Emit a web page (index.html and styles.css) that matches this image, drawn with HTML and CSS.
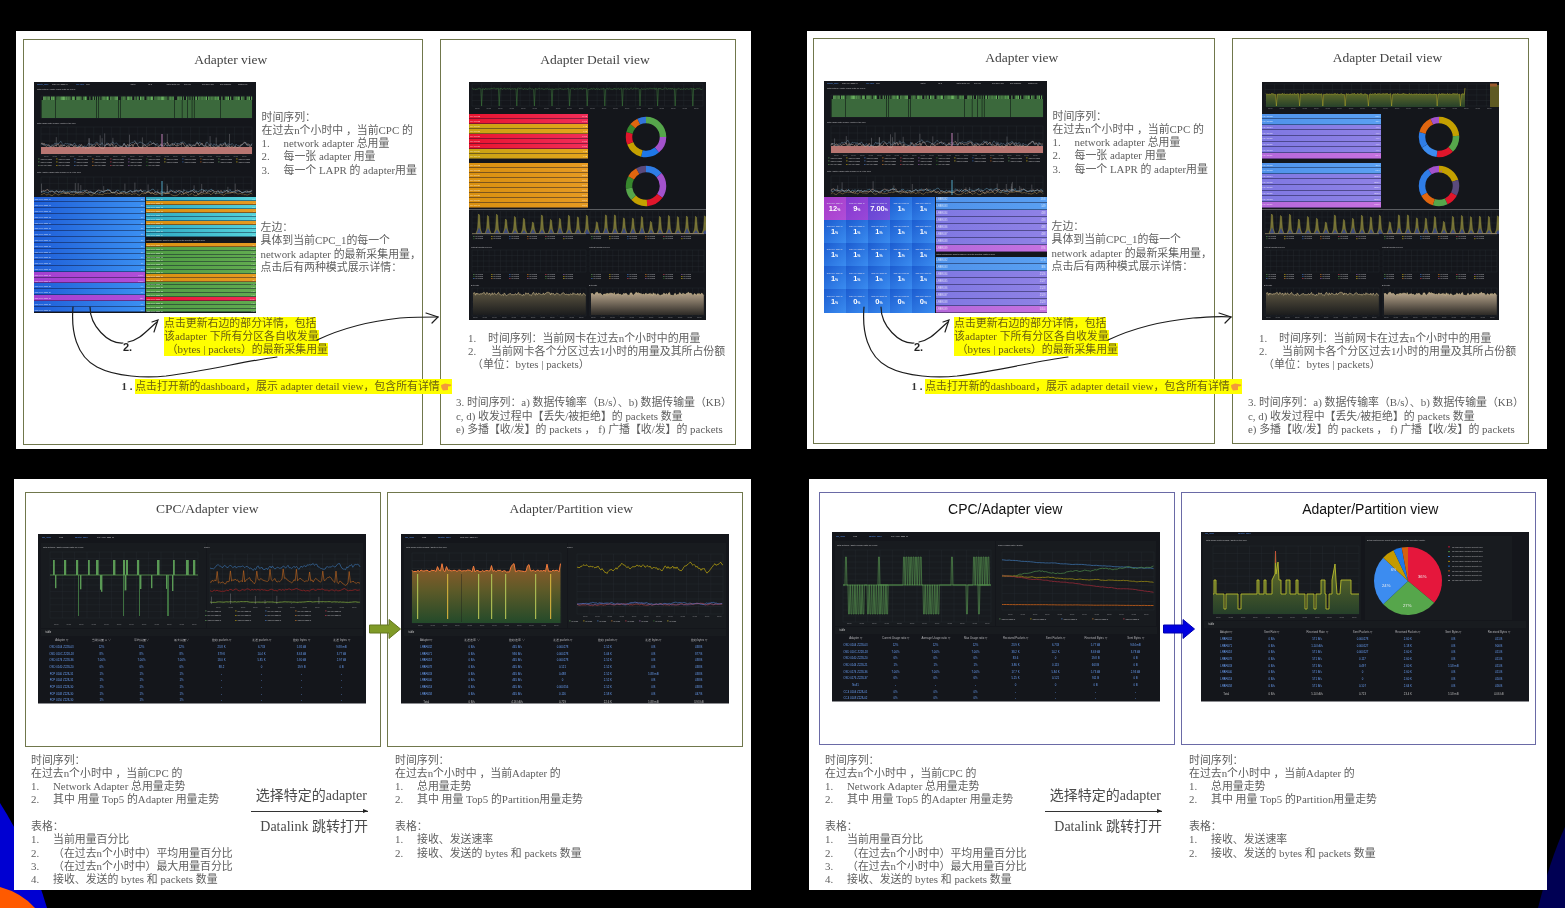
FILE: index.html
```html
<!DOCTYPE html>
<html lang="en">
<head>
    <meta charset="UTF-8">
    <meta name="viewport" content="width=device-width, initial-scale=1.0">
    <title>Adapter views</title>
    <link rel="stylesheet" href="styles.css">
</head>
<body>
    <svg class="backdrop" viewBox="0 0 1565 908">
        <path d="M0 803 Q30 850 47 908 L0 908 Z" fill="#0000d2"/>
        <path d="M0 887 Q22 893 35 908 L0 908 Z" fill="#ff5a00"/>
        <path d="M1565 827 Q1550 860 1538 908 L1565 908 Z" fill="#000054"/>
    </svg>

    <svg class="defs" width="0" height="0">
        <defs>
            <linearGradient id="fadeOrange" x1="0" y1="0" x2="0" y2="1"><stop offset="0" stop-color="#8f5a2a"/><stop offset="0.45" stop-color="#5d5a28"/><stop offset="1" stop-color="#234a2a"/></linearGradient>
            <linearGradient id="fadeOlive" x1="0" y1="0" x2="0" y2="1"><stop offset="0" stop-color="#757a28"/><stop offset="1" stop-color="#26402a"/></linearGradient>
            <linearGradient id="fadeCream" x1="0" y1="0" x2="0" y2="1"><stop offset="0" stop-color="#5a5340"/><stop offset="1" stop-color="#1b1c1d"/></linearGradient>
            <linearGradient id="fadeSand" x1="0" y1="0" x2="0" y2="1"><stop offset="0" stop-color="#b8a68c"/><stop offset="1" stop-color="#2c2926"/></linearGradient>
        </defs>
    </svg>

    <!-- top left -->
    <section class="slide slide-one">
        <div class="panel panel-adapter">
            <h2 class="panel-title">Adapter view</h2>
            <div class="adapter-row">
                <div class="shot shot-adapter">
                    <div class="chart chart-adapter" data-chart="adapterTop"></div>
                    <div class="lower">
                        <div class="bars" data-bars="oneLeft"></div>
                        <div class="lower-side">
                            <div class="bars bars-teal" data-bars="oneTeal"></div>
                            <div class="lower-title">Bytes Sent/Receive Count of each LPAR for the Selected Adapter in CPC</div>
                            <div class="bars" data-bars="oneGreen"></div>
                        </div>
                    </div>
                </div>
                <div class="adapter-notes">
                    <div class="copy">
                        <p>时间序列：</p>
                        <p>在过去n个小时中 ，当前CPC 的</p>
                        <p class="item"><span>1.</span>network adapter 总用量</p>
                        <p class="item"><span>2.</span>每一张 adapter 用量</p>
                        <p class="item"><span>3.</span>每一个 LAPR 的 adapter用量</p>
                    </div>
                    <div class="copy copy-left">
                        <p>左边：</p>
                        <p>具体到当前CPC_1的每一个</p>
                        <p>network adapter 的最新采集用量，</p>
                        <p>点击后有两种模式展示详情：</p>
                    </div>
                </div>
            </div>
            <div class="note-two">
                <p><mark>点击更新右边的部分详情，包括</mark></p>
                <p><mark>该adapter 下所有分区各自收发量</mark></p>
                <p><mark>&nbsp;（bytes | packets）的最新采集用量</mark></p>
            </div>
            <p class="note-one"><b>1 .</b> <mark>点击打开新的dashboard，展示 adapter detail view，包含所有详情<svg class="finger" viewBox="0 0 12 12"><path d="M1 5 L5 3.5 L11 4.5 Q12 6 10 6.2 L8 6.5 L8 10 L3 10.5 Q1 9 1 5 Z" fill="#f39a3a"/></svg></mark></p>
        </div>
        <div class="panel panel-detail">
            <h2 class="panel-title">Adapter Detail view</h2>
            <div class="shot shot-detail">
                <div class="chart detail-top" data-chart="detailGreen"></div>
                <div class="detail-row">
                    <div class="bars bars-detail" data-bars="oneRed"></div>
                    <div class="chart" data-chart="donutOne"></div>
                </div>
                <div class="detail-row">
                    <div class="bars bars-detail" data-bars="oneOrange"></div>
                    <div class="chart" data-chart="donutTwo"></div>
                </div>
                <div class="detail-rule"></div>
                <div class="chart detail-charts" data-chart="detailCharts"></div>
            </div>
            <div class="copy copy-detail">
                <p class="item item-one"><span>1.</span>时间序列：当前网卡在过去n个小时中的用量</p>
                <p class="item item-two"><span>2.</span>当前网卡各个分区过去1小时的用量及其所占份额</p>
                <p class="item-unit">（单位：bytes | packets）</p>
            </div>
            <div class="copy copy-series">
                <p>3. 时间序列：a) 数据传输率（B/s）、b) 数据传输量（KB）</p>
                <p>c, d) 收发过程中【丢失/被拒绝】的 packets 数量</p>
                <p>e) 多播【收/发】的 packets ， f) 广播【收/发】的 packets</p>
            </div>
        </div>
        <svg class="scribble" viewBox="0 0 735 418">
            <path d="M74 276 C74 295 92 313 107 312"/>
            <path d="M112 311 C125 308 130 300 141 291"/>
            <path d="M136 291 L142 289 L138 301"/>
            <path d="M57 276 C55 300 60 325 81 336 C100 346 130 347 150 345 C190 340 230 330 261 326"/>
            <path d="M301 309 C320 300 345 291 384 287 C400 286 410 286 422 286"/>
            <path d="M410 282 L422 286 L416 292"/>
            <text x="107" y="320">2.</text>
        </svg>
    </section>

    <!-- top right -->
    <section class="slide slide-two">
        <div class="panel panel-adapter">
            <h2 class="panel-title">Adapter view</h2>
            <div class="adapter-row">
                <div class="shot shot-adapter">
                    <div class="chart chart-adapter" data-chart="adapterTop"></div>
                    <div class="lower">
                        <div class="stats" data-stats="adapters"></div>
                        <div class="lower-side">
                            <div class="bars bars-tall" data-bars="twoBytes"></div>
                            <div class="lower-title">Bytes Sent/Receive Count of each LPAR for the Selected Adapter in CPC</div>
                            <div class="bars bars-tall" data-bars="twoPackets"></div>
                        </div>
                    </div>
                </div>
                <div class="adapter-notes">
                    <div class="copy">
                        <p>时间序列：</p>
                        <p>在过去n个小时中 ，当前CPC 的</p>
                        <p class="item"><span>1.</span>network adapter 总用量</p>
                        <p class="item"><span>2.</span>每一张 adapter 用量</p>
                        <p class="item"><span>3.</span>每一个 LAPR 的 adapter用量</p>
                    </div>
                    <div class="copy copy-left">
                        <p>左边：</p>
                        <p>具体到当前CPC_1的每一个</p>
                        <p>network adapter 的最新采集用量，</p>
                        <p>点击后有两种模式展示详情：</p>
                    </div>
                </div>
            </div>
            <div class="note-two">
                <p><mark>点击更新右边的部分详情，包括</mark></p>
                <p><mark>该adapter 下所有分区各自收发量</mark></p>
                <p><mark>&nbsp;（bytes | packets）的最新采集用量</mark></p>
            </div>
            <p class="note-one"><b>1 .</b> <mark>点击打开新的dashboard，展示 adapter detail view，包含所有详情<svg class="finger" viewBox="0 0 12 12"><path d="M1 5 L5 3.5 L11 4.5 Q12 6 10 6.2 L8 6.5 L8 10 L3 10.5 Q1 9 1 5 Z" fill="#f39a3a"/></svg></mark></p>
        </div>
        <div class="panel panel-detail">
            <h2 class="panel-title">Adapter Detail view</h2>
            <div class="shot shot-detail">
                <div class="chart detail-top" data-chart="detailOlive"></div>
                <div class="detail-row">
                    <div class="bars bars-detail" data-bars="twoDetailBytes"></div>
                    <div class="chart" data-chart="donutThree"></div>
                </div>
                <div class="detail-row">
                    <div class="bars bars-detail" data-bars="twoDetailPackets"></div>
                    <div class="chart" data-chart="donutFour"></div>
                </div>
                <div class="detail-rule"></div>
                <div class="chart detail-charts" data-chart="detailCharts"></div>
            </div>
            <div class="copy copy-detail">
                <p class="item item-one"><span>1.</span>时间序列：当前网卡在过去n个小时中的用量</p>
                <p class="item item-two"><span>2.</span>当前网卡各个分区过去1小时的用量及其所占份额</p>
                <p class="item-unit">（单位：bytes | packets）</p>
            </div>
            <div class="copy copy-series">
                <p>3. 时间序列：a) 数据传输率（B/s）、b) 数据传输量（KB）</p>
                <p>c, d) 收发过程中【丢失/被拒绝】的 packets 数量</p>
                <p>e) 多播【收/发】的 packets ， f) 广播【收/发】的 packets</p>
            </div>
        </div>
        <svg class="scribble" viewBox="0 0 740 418">
            <path d="M74 276 C74 295 92 313 107 312"/>
            <path d="M112 311 C125 308 130 300 141 291"/>
            <path d="M136 291 L142 289 L138 301"/>
            <path d="M57 276 C55 300 60 325 81 336 C100 346 130 347 150 345 C190 340 230 330 261 326"/>
            <path d="M301 309 C320 300 345 291 386 287 C402 286 412 285 424 286"/>
            <path d="M412 282 L424 286 L418 292"/>
            <text x="107" y="320">2.</text>
        </svg>
    </section>

    <!-- bottom left -->
    <section class="slide slide-three">
        <div class="panels">
            <div class="panel panel-wide">
                <h2 class="panel-title">CPC/Adapter view</h2>
                <div class="shot shot-wide">
                    <div class="chart chart-wide" data-chart="cpcOld"></div>
                    <div class="table-title">table</div>
                    <div class="table-wrap" data-table="cpcOld"></div>
                </div>
            </div>
            <div class="panel panel-wide">
                <h2 class="panel-title">Adapter/Partition view</h2>
                <div class="shot shot-wide">
                    <div class="chart chart-wide" data-chart="partitionOld"></div>
                    <div class="table-title">table</div>
                    <div class="table-wrap table-seven" data-table="partitionOld"></div>
                </div>
            </div>
        </div>
        <svg class="jump-arrow" viewBox="0 0 32 20"><path d="M0.5 6 H20 V0.5 L31.5 10 L20 19.5 V14 H0.5 Z" fill="#7f9a27" stroke="#65781f"/></svg>
        <div class="captions">
            <div class="copy">
                <p>时间序列：</p>
                <p>在过去n个小时中 ，当前CPC 的</p>
                <p class="item"><span>1.</span>Network Adapter 总用量走势</p>
                <p class="item"><span>2.</span>其中 用量 Top5 的Adapter 用量走势</p>
                <p>&nbsp;</p>
                <p>表格：</p>
                <p class="item"><span>1.</span>当前用量百分比</p>
                <p class="item"><span>2.</span>（在过去n个小时中）平均用量百分比</p>
                <p class="item"><span>3.</span>（在过去n个小时中）最大用量百分比</p>
                <p class="item"><span>4.</span>接收、发送的 bytes 和 packets 数量</p>
            </div>
            <div class="jump-label">
                <p>选择特定的adapter</p>
                <div class="jump-line"></div>
                <p>Datalink 跳转打开</p>
            </div>
            <div class="copy">
                <p>时间序列：</p>
                <p>在过去n个小时中 ，当前Adapter 的</p>
                <p class="item"><span>1.</span>总用量走势</p>
                <p class="item"><span>2.</span>其中 用量 Top5 的Partition用量走势</p>
                <p>&nbsp;</p>
                <p>表格：</p>
                <p class="item"><span>1.</span>接收、发送速率</p>
                <p class="item"><span>2.</span>接收、发送的 bytes 和 packets 数量</p>
            </div>
        </div>
    </section>

    <!-- bottom right -->
    <section class="slide slide-four">
        <div class="panels">
            <div class="panel panel-wide">
                <h2 class="panel-title">CPC/Adapter view</h2>
                <div class="shot shot-wide">
                    <div class="chart chart-wide" data-chart="cpcNew"></div>
                    <div class="table-title">table</div>
                    <div class="table-wrap" data-table="cpcNew"></div>
                </div>
            </div>
            <div class="panel panel-wide">
                <h2 class="panel-title">Adapter/Partition view</h2>
                <div class="shot shot-wide">
                    <div class="chart chart-wide chart-short" data-chart="partitionNew"></div>
                    <div class="table-title">table</div>
                    <div class="table-wrap table-seven" data-table="partitionNew"></div>
                </div>
            </div>
        </div>
        <svg class="jump-arrow" viewBox="0 0 32 20"><path d="M0.5 6 H20 V0.5 L31.5 10 L20 19.5 V14 H0.5 Z" fill="#0000e0" stroke="#0000b0"/></svg>
        <div class="captions">
            <div class="copy">
                <p>时间序列：</p>
                <p>在过去n个小时中 ，当前CPC 的</p>
                <p class="item"><span>1.</span>Network Adapter 总用量走势</p>
                <p class="item"><span>2.</span>其中 用量 Top5 的Adapter 用量走势</p>
                <p>&nbsp;</p>
                <p>表格：</p>
                <p class="item"><span>1.</span>当前用量百分比</p>
                <p class="item"><span>2.</span>（在过去n个小时中）平均用量百分比</p>
                <p class="item"><span>3.</span>（在过去n个小时中）最大用量百分比</p>
                <p class="item"><span>4.</span>接收、发送的 bytes 和 packets 数量</p>
            </div>
            <div class="jump-label">
                <p>选择特定的adapter</p>
                <div class="jump-line"></div>
                <p>Datalink 跳转打开</p>
            </div>
            <div class="copy">
                <p>时间序列：</p>
                <p>在过去n个小时中 ，当前Adapter 的</p>
                <p class="item"><span>1.</span>总用量走势</p>
                <p class="item"><span>2.</span>其中 用量 Top5 的Partition用量走势</p>
                <p>&nbsp;</p>
                <p>表格：</p>
                <p class="item"><span>1.</span>接收、发送速率</p>
                <p class="item"><span>2.</span>接收、发送的 bytes 和 packets 数量</p>
            </div>
        </div>
    </section>

    <script src="charts.js"></script>
</body>
</html>
```

FILE: styles.css
```css
* {
    box-sizing: border-box;
}
html, body {
    height: 100%;
}
body {
    margin: 0;
    background-color: #000;
    overflow: hidden;
    font-family: "Liberation Serif", "Noto Sans CJK SC", serif;
    color: #5e5e5e;
}
p {
    margin: 0;
}
.backdrop {
    position: absolute;
    left: 0;
    top: 0;
    width: 1565px;
    height: 908px;
}
.defs {
    position: absolute;
}
.slide {
    position: absolute;
    background-color: #fff;
    filter: blur(0.4px);
}
.slide-one {
    left: 16px;
    top: 31px;
    width: 735px;
    height: 418px;
    display: flex;
    gap: 17px;
    padding: 8px 0 0 7px;
}
.slide-two {
    left: 807px;
    top: 31px;
    width: 740px;
    height: 418px;
    display: flex;
    gap: 17px;
    padding: 7px 0 0 6px;
}
.slide-three {
    left: 14px;
    top: 479px;
    width: 737px;
    height: 411px;
    padding: 13px 0 0 11px;
}
.slide-four {
    left: 809px;
    top: 479px;
    width: 738px;
    height: 411px;
    padding: 13px 0 0 10px;
}
.panels {
    display: flex;
    gap: 6px;
}
.panel {
    border: 1.5px solid #70774c;
    flex: none;
}
.panel-title {
    margin: 0;
    font-size: 13.5px;
    font-weight: normal;
    text-align: center;
    color: #444;
    line-height: 16px;
    padding-top: 12px;
    height: 41.5px;
}

/* upper slides */
.panel-adapter {
    width: 400px;
    height: 406px;
    padding-left: 9.5px;
}
.panel-adapter .panel-title {
    padding-left: 6px;
}
.panel-detail {
    width: 296px;
    height: 406px;
}
.panel-detail .panel-title {
    padding-left: 14px;
}
.slide-two .panel-adapter {
    width: 402px;
}
.slide-two .panel-detail {
    width: 297px;
}
.slide-two .panel-title {
    padding-top: 11px;
}
.slide-two .panel-detail .panel-title {
    height: 42.5px;
}
.adapter-row {
    display: flex;
}
.adapter-notes {
    margin-left: 6px;
    padding-top: 29px;
    white-space: nowrap;
}
.copy {
    font-size: 10.9px;
    line-height: 13.3px;
    white-space: nowrap;
}
.copy-left {
    margin-top: 44px;
    margin-left: -1px;
}
.item span {
    display: inline-block;
    width: 22px;
}
.note-two {
    margin: 4px 0 0 130.5px;
    font-size: 10.9px;
    line-height: 13px;
    white-space: nowrap;
    color: #6a5e12;
}
.note-two mark, .note-one mark {
    background-color: #ffff00;
    color: #6a5e12;
    display: inline-block;
}
.note-one {
    margin: 23px 0 0 88px;
    font-size: 10.9px;
    line-height: 15px;
    white-space: nowrap;
    color: #333;
    position: relative;
}
.finger {
    width: 12px;
    height: 12px;
    vertical-align: -2px;
}
.scribble {
    position: absolute;
    left: 0;
    top: 0;
    width: 100%;
    height: 100%;
    pointer-events: none;
}
.scribble path {
    fill: none;
    stroke: #1c1c1c;
    stroke-width: 1.2;
    stroke-linecap: round;
}
.scribble text {
    font: bold 11px "Liberation Sans", sans-serif;
    fill: #222;
}
.copy-detail {
    margin: 12px 0 0 27px;
}
.copy-detail .item span {
    width: 20px;
}
.item-two span {
    width: 23px !important;
}
.item-unit {
    margin-left: 4px;
}
.copy-series {
    margin: 25px 0 0 15px;
}
.slide-two .copy-detail {
    margin-left: 26px;
}

/* dashboard pictures */
.shot {
    background-color: #14161b;
    color: #c8c8c8;
    font-family: "Liberation Sans", sans-serif;
    overflow: hidden;
    flex: none;
}
.shot svg {
    display: block;
}
.shot-adapter {
    width: 222px;
    height: 231px;
}
.slide-two .shot-adapter {
    width: 223px;
    height: 232px;
}
.chart-adapter {
    height: 115px;
}
.slide-two .chart-adapter {
    height: 116px;
}
.lower {
    display: flex;
    height: 116px;
    gap: 1px;
}
.lower > .bars, .stats {
    width: 111px;
    flex: none;
}
.lower-side {
    flex: 1;
    display: flex;
    flex-direction: column;
    min-width: 0;
}
.lower-side .bars {
    flex: 1;
}
.bars-teal {
    flex: none !important;
    height: 41px;
}
.lower-title {
    height: 5.5px;
    flex: none;
    font-size: 1.8px;
    line-height: 5.5px;
    padding-left: 1px;
    white-space: nowrap;
    overflow: hidden;
}
.bars {
    display: flex;
    flex-direction: column;
    min-height: 0;
}
.bar {
    flex: 1;
    display: flex;
    align-items: center;
    justify-content: space-between;
    padding: 0 1px;
    font-size: 1.9px;
    color: rgba(255, 255, 255, 0.7);
    min-height: 0;
    overflow: hidden;
    box-shadow: inset 0 -1px rgba(10, 14, 40, 0.45);
}
.bars-tall .bar {
    font-size: 2.6px;
}
.bars-detail .bar {
    font-size: 2.4px;
}
.bar-blue { background: linear-gradient(90deg, #1f5fd8, #3b90f2); }
.bar-purple { background: linear-gradient(90deg, #a53fd0, #b04ed8); }
.bar-teal { background: linear-gradient(90deg, #2ea8c2, #55d3dc); }
.bar-orange { background: linear-gradient(90deg, #d9900f, #e69a22); }
.bar-green { background: linear-gradient(90deg, #4f9c43, #62ab50); }
.bar-red { background: linear-gradient(90deg, #e8142f, #f22d58); }
.bar-gold { background: linear-gradient(90deg, #c8a312, #e5a41c); }
.bar-sky { background: linear-gradient(90deg, #4f92ea, #5aa0f2); }
.bar-violet { background: linear-gradient(90deg, #7f78e2, #8f82e6); }
.bar-pink { background: linear-gradient(90deg, #b468da, #c672e0); }
.stats {
    display: grid;
    grid-template-columns: repeat(5, 1fr);
    grid-template-rows: repeat(5, 1fr);
}
.stat {
    display: flex;
    flex-direction: column;
    align-items: center;
    justify-content: center;
    color: #fff;
    font-size: 7.5px;
    font-weight: bold;
    line-height: 8px;
    background: linear-gradient(135deg, #1c5cd0, #3a8cf0);
}
.stat small {
    font-size: 3.5px;
}
.stat i {
    font-style: normal;
    font-weight: normal;
    font-size: 1.8px;
    line-height: 3px;
    color: #dde;
}
.stat-hot { background: linear-gradient(135deg, #a53bc8, #b04ed8); }
.stat-warm { background: linear-gradient(135deg, #8238d0, #9a48d8); }
.stat-mild { background: linear-gradient(135deg, #6040d0, #7a52dc); }
.shot-detail {
    width: 237px;
    height: 238px;
}
.detail-top {
    height: 28px;
}
.detail-row {
    display: grid;
    grid-template-columns: 119px 1fr;
    height: 49px;
}
.bars-detail {
    padding-top: 4px;
}
.detail-rule {
    height: 1px;
    margin-top: 1px;
    background-color: #5a5c60;
}
.detail-charts {
    height: 110px;
}
.panel-detail .shot-detail {
    margin-left: 28px;
}
.slide-two .panel-detail .shot-detail {
    margin-left: 28.5px;
}

/* lower slides */
.panel-wide {
    width: 356px;
    height: 255px;
    padding-left: 11.5px;
}
.panel-wide + .panel-wide {
    padding-left: 12.5px;
}
.slide-three .panel-title {
    height: 40.5px;
    padding-top: 8px;
}
.slide-three .panel-wide:first-child .panel-title {
    padding-right: 3px;
    padding-left: 0;
}
.shot-wide {
    width: 328px;
    height: 170px;
    border: 1px solid #8b8c90;
    border-width: 0 0 1px 0;
}
.chart-wide {
    height: 95px;
}
.chart-short {
    height: 89px;
}
.table-title {
    height: 7px;
    font-size: 2.6px;
    line-height: 7px;
    padding-left: 5px;
    background-color: #181b1f;
    margin: 0 3px;
}
.table-wrap {
    padding-left: 4px;
}
.table-seven {
    padding-left: 3px;
}
.mini-table {
    width: 320px;
    border-collapse: collapse;
    table-layout: fixed;
    font-size: 2.8px;
    text-align: center;
}
.table-seven .mini-table {
    width: 318px;
}
.mini-table th {
    height: 8px;
    font-weight: normal;
    color: #b4b4b8;
    padding: 0;
}
.mini-table td {
    height: 6.7px;
    color: #6a9ff5;
    padding: 0;
}
.mini-table .total td {
    color: #bbb;
    height: 10px;
}
.slide-four .panel-wide {
    height: 253px;
}
.slide-four .panel-title {
    font-family: "Liberation Sans", sans-serif;
    font-size: 14px;
    color: #111;
    height: 38.5px;
    padding-top: 7.5px;
    padding-left: 5px;
}
.slide-four .panel {
    border-color: #6a6aa6;
}
.slide-four .panel-wide + .panel-wide {
    width: 355px;
    padding-left: 18.5px;
}
.jump-arrow {
    position: absolute;
    left: 355px;
    top: 140px;
    width: 32px;
    height: 20px;
}
.slide-four .jump-arrow {
    left: 354px;
}
.captions {
    display: grid;
    grid-template-columns: 220px 144px 1fr;
    padding: 6.5px 0 0 6px;
}
.slide-four .captions {
    padding-top: 8.5px;
}
.jump-label {
    padding-top: 33px;
    font-size: 14px;
    line-height: 18px;
    text-align: right;
    color: #4a4a4a;
    white-space: nowrap;
}
.jump-label p:first-child {
    padding-right: 28px;
}
.jump-label p:last-child {
    padding-right: 27px;
    padding-top: 6px;
}
.jump-line {
    position: relative;
    height: 1px;
    margin: 6px 0 0 0;
    width: 117px;
    background-color: #333;
}
.jump-line::after {
    content: "";
    position: absolute;
    right: 0;
    top: -2px;
    border-left: 5px solid #222;
    border-top: 2.5px solid transparent;
    border-bottom: 2.5px solid transparent;
}
```

FILE: charts.js
```js
// small seeded generator so every chart comes out the same on each load
function seeded(seed) {
    return function () {
        seed = (seed * 16807) % 2147483647;
        return seed / 2147483647;
    };
}

function line(pts, color, width) {
    const points = pts.map(p => p[0].toFixed(1) + ',' + p[1].toFixed(1)).join(' ');
    return `<polyline points="${points}" fill="none" stroke="${color}" stroke-width="${width || 0.6}"/>`;
}

function area(pts, base, fill) {
    const points = pts.map(p => p[0].toFixed(1) + ',' + p[1].toFixed(1)).join(' ');
    const first = pts[0][0].toFixed(1);
    const last = pts[pts.length - 1][0].toFixed(1);
    return `<polygon points="${first},${base} ${points} ${last},${base}" fill="${fill}"/>`;
}

function rect(x, y, w, h, fill) {
    return `<rect x="${x.toFixed(1)}" y="${y.toFixed(1)}" width="${w.toFixed(1)}" height="${h.toFixed(1)}" fill="${fill}"/>`;
}

function label(x, y, text, size, color) {
    return `<text x="${x}" y="${y}" font-size="${size || 2}" fill="${color || '#bdbdc0'}">${text}</text>`;
}

function grid(x, y, w, h, cols, rows) {
    let out = '';
    for (let i = 0; i <= cols; i++) {
        const gx = x + (w * i) / cols;
        out += `<line x1="${gx}" y1="${y}" x2="${gx}" y2="${y + h}" stroke="#2a2d33" stroke-width="0.35"/>`;
    }
    for (let i = 0; i <= rows; i++) {
        const gy = y + (h * i) / rows;
        out += `<line x1="${x}" y1="${gy}" x2="${x + w}" y2="${gy}" stroke="#2a2d33" stroke-width="0.35"/>`;
    }
    return out;
}

function ticks(x, y, w, count, text) {
    let out = '';
    for (let i = 0; i < count; i++) {
        out += label((x + (w * i) / (count - 1) - 2).toFixed(1), y, text || '16:00', 1.8, '#8f9094');
    }
    return out;
}

function walk(random, x0, x1, step, y, amp, pull) {
    const pts = [];
    let v = 0;
    for (let x = x0; x <= x1; x += step) {
        v = v * (pull || 0.7) + (random() - 0.5) * amp;
        pts.push([x, y + v]);
    }
    return pts;
}

function spikes(random, x0, x1, y, top, count) {
    let out = '';
    for (let i = 0; i < count; i++) {
        const x = x0 + random() * (x1 - x0);
        out += `<line x1="${x.toFixed(1)}" y1="${y}" x2="${x.toFixed(1)}" y2="${(y - random() * top).toFixed(1)}" stroke="#9fa0a4" stroke-width="0.35"/>`;
    }
    return out;
}

const legendColors = ['#73bf69', '#f2cc0c', '#5794f2', '#ff9830', '#f2495c', '#b877d9', '#37872d', '#fade2a', '#3274d9', '#e0660f'];

function legend(x, y, cols, rows, gapX, gapY, name) {
    let out = '';
    for (let r = 0; r < rows; r++) {
        for (let c = 0; c < cols; c++) {
            const lx = x + c * gapX;
            const ly = y + r * gapY;
            out += rect(lx, ly - 0.8, 1.6, 0.5, legendColors[(r * cols + c) % legendColors.length]);
            out += label(lx + 2.4, ly, name, 1.6);
        }
    }
    return out;
}

function donut(cx, cy, radius, widthStroke, parts) {
    let out = `<g transform="rotate(-90 ${cx} ${cy})">`;
    let done = 0;
    parts.forEach(p => {
        out += `<circle cx="${cx}" cy="${cy}" r="${radius}" fill="none" stroke="${p[0]}" stroke-width="${widthStroke}" pathLength="100" stroke-dasharray="${p[1]} ${100 - p[1]}" stroke-dashoffset="${-done}"/>`;
        done += p[1];
    });
    return out + '</g>';
}

function slice(cx, cy, r, from, to, color) {
    const a = (from / 100) * Math.PI * 2 - Math.PI / 2;
    const b = (to / 100) * Math.PI * 2 - Math.PI / 2;
    const big = to - from > 50 ? 1 : 0;
    return `<path d="M${cx} ${cy} L${(cx + r * Math.cos(a)).toFixed(2)} ${(cy + r * Math.sin(a)).toFixed(2)} A${r} ${r} 0 ${big} 1 ${(cx + r * Math.cos(b)).toFixed(2)} ${(cy + r * Math.sin(b)).toFixed(2)} Z" fill="${color}"/>`;
}

const charts = {
    adapterTop: function (w) {
        const random = seeded(4242);
        const right = w - 4;
        let out = label(3, 2.6, 'adapter_name', 1.8, '#5794f2') + label(18, 2.6, 'OSD 0104 Z228-03', 1.8) + label(42, 2.6, 'cpc_name', 1.8, '#5794f2') + label(52, 2.6, 'M72', 1.8);
        ['Adapter', 'LPAR', 'Adapter Detail view', 'CPC view', 'CPC SMC Home', 'New dashboard', 'Partition view'].forEach((name, i) => {
            out += label(96 + i * 18, 2.6, name, 1.6);
        });
        out += label(3, 8, 'Total Network Adapter Usage Ratio for a CPC', 1.9);
        out += grid(7, 14, right - 7, 22, 24, 4);
        out += rect(7, 18, right - 7, 18, '#3b693c');
        for (let x = 7; x < right; x += 1.1) {
            if (random() > 0.28) {
                out += rect(x, 14.5, 1, 3.5, random() > 0.5 ? '#68b05e' : '#4b8a47');
            } else if (random() > 0.8) {
                out += rect(x, 18, 0.7, 18, '#16241a');
            }
        }
        out += label(3, 41.5, 'Total Usage Ratio of Each Adapter in the CPC', 1.9);
        out += grid(7, 45, right - 7, 28, 24, 4);
        out += rect(7, 65, right - 7, 7, '#b87672');
        out += line(walk(random, 7, right, 1, 63.5, 4, 0.6), '#c7a99a', 0.5);
        out += line(walk(random, 7, right, 1, 62, 4, 0.6), '#7fa7c9', 0.35);
        out += spikes(random, 7, right, 65, 14, 24);
        out += `<line x1="128" y1="65" x2="128" y2="52" stroke="#d58ccb" stroke-width="0.9"/>`;
        out += ticks(12, 75, right - 20, 24);
        out += legend(4, 77.5, 12, 1, 18, 3.4, 'OSD 0104 Z228');
        out += legend(4, 80.5, 12, 1, 18, 3.4, 'OSD 0146 Z228');
        out += legend(4, 84, 7, 1, 18, 3.4, 'FCP 0104 Z228');
        out += label(3, 91, 'Total Adapter Usage Ratio of Each LPAR in the CPC', 1.9);
        out += grid(7, 95, right - 7, 19, 24, 3);
        out += line(walk(random, 7, right, 1, 110, 3, 0.6), '#c7a99a', 0.5);
        out += line(walk(random, 7, right, 1, 109.5, 3, 0.6), '#6fb4d6', 0.4);
        out += line(walk(random, 7, right, 1, 112, 2, 0.6), '#caa45a', 0.4);
        out += spikes(random, 7, right, 111, 11, 24);
        out += `<line x1="128" y1="114" x2="128" y2="99" stroke="#58b6d8" stroke-width="0.9"/>`;
        return out;
    },
    detailGreen: function (w) {
        const random = seeded(991);
        let out = grid(3, 2, w - 6, 22, 24, 4);
        const pts = [];
        for (let x = 3; x < w - 3; x += 0.8) {
            const near = (x - 12) % 17.6;
            pts.push([x, near > 0 && near < 1 ? 24 : 6 + random() * 1.6]);
        }
        out += line(pts, '#3f7f3d', 0.5);
        out += ticks(8, 26.5, w - 18, 20);
        return out;
    },
    detailOlive: function (w) {
        const random = seeded(333);
        let out = grid(3, 2, w - 6, 22, 24, 4);
        const pts = [];
        for (let x = 4; x < 203; x += 0.8) {
            const near = (x - 14) % 23;
            pts.push([x, near > 0 && near < 0.8 ? 24 : 11.5 + random() * 1.2]);
        }
        pts.push([203, 6]);
        out += area(pts, 25, 'url(#fadeOlive)') + line(pts, '#b8b02a', 0.5);
        out += rect(228, 3, 9, 22, '#5f5a22') + rect(228, 1.5, 7, 3, '#9a5a2c');
        out += ticks(8, 27, w - 18, 20);
        return out;
    },
    donutOne: function () {
        return donut(58, 27, 17, 6.5, [['#56a64b', 25], ['#a352cc', 14], ['#1f78e8', 15], ['#c4a000', 15], ['#e0162b', 10], ['#37872d', 7], ['#e0660f', 7], ['#3274d9', 7]]);
    },
    donutTwo: function () {
        return donut(58, 27, 17, 6.5, [['#2f7de6', 14], ['#a352cc', 21], ['#e0162b', 14], ['#c4a000', 14], ['#56a64b', 10], ['#37872d', 10], ['#e0660f', 9], ['#5a4a7c', 8]]);
    },
    donutThree: function () {
        return donut(58, 27, 17, 6.5, [['#c4a000', 24], ['#56a64b', 14], ['#e0162b', 14], ['#3c8cf0', 14], ['#2f7de6', 13], ['#e0660f', 14], ['#a352cc', 7]]);
    },
    donutFour: function () {
        return donut(58, 27, 17, 6.5, [['#c4a000', 20], ['#5a4a7c', 13], ['#e0162b', 10], ['#56a64b', 12], ['#e0660f', 12], ['#2f7de6', 24], ['#a352cc', 9]]);
    },
    detailCharts: function (w) {
        const random = seeded(77);
        let out = '';
        [1, 119].forEach((x, col) => {
            const width = 116;
            out += grid(x + 2, 1, width - 2, 24, 20, 4);
            const yellow = [];
            const blue = [];
            for (let i = 0; i < 13; i++) {
                const px = x + 9 + i * 9;
                const top = 4 + random() * 8;
                yellow.push([px - 3, 23.5], [px - 1.4, 19], [px - 0.5, top], [px + 0.5, top + 1], [px + 1.4, 19], [px + 3, 23.5]);
                blue.push([px - 2.5, 23.5], [px, 17 + random() * 3], [px + 2.5, 23.5]);
            }
            out += area(yellow, 24, '#6f6c36') + line(yellow, '#a8a23c', 0.4);
            out += area(blue, 24, '#3d4a7c');
            out += rect(x + 2, 23.3, width - 2, 0.8, col ? '#a58f6c' : '#8d8060');
            out += legend(x + 3, 27, 6, 2, 18, 2.4, 'LPAR0032');
            out += label(x + 1, 38, 'Multicast Packets Received', 1.7);
            out += grid(x + 2, 40, width - 2, 22, 20, 4);
            out += legend(x + 3, 65, 6, 3, 18, 2, 'LPAR0032');
            out += label(x + 1, 76, 'Bytes Rate', 1.7);
            out += grid(x + 2, 78, width - 2, 28, 20, 4);
            const noise = walk(random, x + 3, x + width, 0.8, 84, 3, 0.2);
            out += area(noise, 105, col ? 'url(#fadeSand)' : 'url(#fadeCream)');
            out += line(noise, '#e0cb96', 0.5);
            out += ticks(x + 5, 108, width - 10, 12);
        });
        return out;
    },
    cpcOld: function () {
        const random = seeded(5150);
        let out = rect(3, 9, 165, 85, '#181b1f') + rect(169, 9, 156, 85, '#181b1f');
        out += label(4, 3.8, 'cpc_name', 2, '#5794f2') + label(21, 3.8, 'M72', 2) + label(37, 3.8, 'adapter_name', 2, '#5794f2') + label(59, 3.8, 'CCA 0104 Z228-01', 2);
        out += label(5, 14, 'Total Network Adapter Usage Ratio for a CPC', 2);
        out += label(166, 14, 'TOP 5', 2);
        out += grid(12, 18, 148, 66, 12, 10);
        const up = [15, 26, 38, 50, 58, 75, 85, 88, 99, 119, 135, 148, 155];
        const down = [17, 42, 63, 62, 85, 87, 102, 113, 129, 128, 134];
        up.forEach(x => { out += rect(x, 26, 1.8 + random(), 15, '#5a9a55'); });
        down.forEach(x => { out += rect(x, 41, 1.4, 13 + random() * 4, '#5a9a55'); });
        [40, 85, 101, 129, 130].forEach(x => { out += rect(x, 41, 1, 41, '#3e7040'); });
        out += line([[12, 41], [160, 41]], '#5a9a52', 0.8);
        out += ticks(18, 91, 138, 12);
        out += grid(172, 20, 150, 50, 12, 10);
        out += line(walk(random, 172, 322, 1.2, 33, 4), '#3d78b8', 0.6);
        const orange = walk(random, 172, 322, 1.2, 47, 4);
        for (let i = 6; i < orange.length; i += 11) {
            orange[i][1] -= 10;
        }
        out += line(orange, '#c76a1f', 0.6);
        out += line(walk(random, 172, 322, 1.4, 56, 2), '#a82222', 0.7);
        out += line(walk(random, 172, 322, 1.4, 68, 0.6), '#7ea83f', 0.8);
        out += spikes(random, 172, 322, 70, 14, 8);
        out += ticks(180, 74, 136, 12);
        out += legend(167, 77.5, 5, 1, 30, 4.6, 'FCP 0104 Z228-08');
        out += legend(167, 82, 5, 1, 30, 4.6, 'FCP 0146 Z228-09');
        out += legend(167, 87, 4, 1, 30, 4.6, 'OSD 0104 Z228-03');
        return out;
    },
    partitionOld: function () {
        const random = seeded(8128);
        let out = rect(3, 9, 163, 85, '#181b1f') + rect(167, 9, 158, 85, '#181b1f');
        out += label(4, 3.8, 'cpc_name', 2, '#5794f2') + label(21, 3.8, 'M72', 2) + label(37, 3.8, 'adapter_name', 2, '#5794f2') + label(59, 3.8, 'OSD 0104 Z228-03', 2);
        out += label(5, 14, 'Total Usage Ratio of Each Adapter in the CPC', 2);
        out += label(166, 14, 'TOP 5', 2);
        out += grid(11, 19, 149, 70, 12, 9);
        const pts = [];
        for (let x = 11; x <= 160; x += 1.5) {
            pts.push([x, random() > 0.86 ? 29 + random() * 4 : 36 + random() * 2]);
        }
        out += area(pts, 89, 'url(#fadeOrange)') + line(pts, '#f47a3c', 1);
        [16, 46, 77, 90, 104, 134, 149].forEach(x => {
            out += rect(x, 40, 1.2, 45, x === 46 || x === 149 ? '#c9a93a' : '#a8b850');
        });
        out += rect(60, 40, 0.4, 48, '#1a1c1c');
        out += ticks(19, 92, 136, 12);
        out += grid(176, 20, 146, 60, 12, 8);
        out += line(walk(random, 176, 322, 1, 35, 4, 0.96), '#a89510', 0.8);
        out += line(walk(random, 176, 322, 1.2, 70, 1.4, 0.9), '#4a7fd0', 0.6);
        out += line(walk(random, 176, 322, 1.2, 70.5, 1.4, 0.9), '#c24a4a', 0.6);
        out += line(walk(random, 176, 322, 1.2, 70, 1.2, 0.9), '#7a6fc8', 0.4);
        out += ticks(184, 83, 134, 12);
        out += legend(168, 87.5, 8, 1, 14, 3, 'LPAR032');
        return out;
    },
    cpcNew: function () {
        const random = seeded(2718);
        let out = rect(3, 9, 160, 85, '#181b1f') + rect(164, 9, 160, 85, '#181b1f');
        out += label(4, 5, 'cpc_name', 2, '#5794f2') + label(21, 5, 'M72', 2) + label(37, 5, 'adapter_name', 2, '#5794f2') + label(59, 5, 'CCA 0104 Z228-01', 2);
        out += label(5, 14, 'Total Network Adapter Usage Ratio for a CPC', 2);
        out += label(166, 14, 'TOP 5 Usage Ratio Adapter', 2);
        out += grid(11, 18, 148, 72, 12, 12);
        const pts = [[11, 53]];
        [[13, 15, 25], [16, 31, 82], [35, 56, 82], [46, 47, 25], [71, 88, 25], [91, 106, 82], [119, 120, 25], [134, 135, 82], [141, 156, 25], [146, 147, 82]].forEach(seg => {
            for (let x = seg[0]; x <= seg[1]; x += 2.4) {
                pts.push([x, 53], [x + 0.5, seg[2]], [x + 1.4, seg[2]], [x + 1.9, 53]);
            }
        });
        pts.push([159, 53]);
        out += line(pts, '#4c8248', 0.8);
        out += line([[11, 53], [159, 53]], '#5a9a52', 0.7);
        out += ticks(17, 92, 138, 12);
        out += grid(170, 20, 152, 58, 12, 7);
        const drift = (y0, y1, amp) => walk(random, 170, 322, 1.5, 0, amp, 0.8).map(p => [p[0], p[1] + y0 + ((p[0] - 170) / 152) * (y1 - y0)]);
        out += line(drift(28, 37, 0.5), '#3d78b8', 0.7);
        out += line(drift(43, 35, 1.6), '#4e8a49', 0.7);
        out += line(drift(44, 50, 0.8), '#a89510', 0.7);
        out += line(drift(44, 60, 0.6), '#a82a3a', 0.7);
        out += line(drift(72.5, 73.5, 0.1), '#b85a1a', 0.9);
        out += ticks(178, 83, 136, 12);
        out += legend(167, 87.5, 5, 1, 31, 3, 'OSD 0104 Z228-03');
        return out;
    },
    partitionNew: function () {
        let out = rect(2, 4, 158, 84, '#181b1f') + rect(164, 4, 147, 84, '#181b1f');
        out += label(4, 1.6, 'cpc_name', 2, '#5794f2') + label(37, 1.6, 'adapter_name', 2, '#5794f2');
        out += label(5, 8.6, 'Total Usage Ratio of Each Adapter in the CPC', 2);
        out += label(166, 8.6, 'Bytes Sent/Receive Count of each LPAR for the Selected Adapter', 2);
        out += grid(12, 14, 146, 68, 12, 9);
        const stepped = [[12, 62], [13, 62], [13, 48], [15, 48], [15, 62], [23, 62], [23, 77], [25, 77], [25, 62], [37, 62], [37, 77], [40, 77], [40, 62], [56, 62], [56, 48], [58, 48], [58, 62], [63, 62], [63, 48], [65, 48], [65, 62], [71, 62], [71, 48], [74, 42], [74.5, 19], [75, 42], [77, 30], [78, 48], [80, 48], [80, 62], [85, 62], [85, 48], [89, 48], [89, 62], [95, 62], [95, 48], [97, 48], [97, 62], [104, 62], [104, 77], [106, 77], [106, 62], [113, 62], [113, 77], [115, 77], [115, 62], [120, 62], [120, 48], [124, 48], [124, 62], [125, 62], [125, 77], [128, 77], [128, 62], [131, 62], [131, 48], [134, 32], [135, 48], [136, 62], [139, 62], [140, 48], [150, 48], [150, 62], [158, 62]];
        out += area(stepped, 82, 'url(#fadeOlive)') + line(stepped, '#b9bc2e', 0.9);
        out += rect(74, 19, 1, 12, '#c4533a');
        out += ticks(17, 86, 136, 12);
        // the pie, clockwise from twelve o'clock
        const parts = [[36, '#e5173c'], [27, '#56a64b'], [24, '#3c8cf0'], [6, '#c49a00'], [4, '#1f78e8'], [3, '#d5600f']];
        let done = 0;
        parts.forEach(p => {
            out += slice(207, 49, 34, done, done + p[0], p[1]);
            done += p[0];
        });
        out += label(217, 46, '36%', 4.2, '#eee') + label(202, 75, '27%', 4.2, '#eee') + label(181, 55, '24%', 4.2, '#eee') + label(190, 39, '6%', 3.6, '#eee');
        ['LPAR32', 'LPAR02', 'LPAR18', 'LPAR11', 'LPAR40', 'LPAR78', 'LPAR53', 'LPAR58'].forEach((name, i) => {
            const y = 15.5 + i * 4.8;
            out += rect(247, y - 1, 2, 0.8, ['#e5173c', '#56a64b', '#3c8cf0', '#c49a00', '#1f78e8', '#d5600f', '#b877d9', '#888'][i]);
            out += label(251, y, name + '  Value: 1003934  Percent: ' + ['36', '27', '24', '6', '4', '3', '0', '0'][i] + '%', 1.8);
        });
        return out;
    }
};

const rep = (code, value, count) => new Array(count).fill([code, value]);

const barSets = {
    oneLeft: [].concat(rep('blue', '1%', 13), rep('purple', '7.00%', 2), rep('blue', '0%', 2), rep('purple', '12%', 1), rep('blue', '0%', 2)),
    oneTeal: [['teal', '4.2'], ['orange', '9'], ['teal', '4.2'], ['orange', '9'], ['teal', '4.1'], ['teal', '4.2'], ['orange', '9'], ['teal', '4.4'], ['teal', '4.2'], ['teal', '4.3']],
    oneGreen: [].concat(rep('orange', '19', 1), rep('green', '441', 7), rep('orange', '19', 2), rep('green', '441', 4), rep('red', '5.04k', 1), rep('green', '441', 3)),
    twoBytes: [['sky', '19.8'], ['sky', '149'], ['violet', '438'], ['violet', '438'], ['violet', '438'], ['violet', '438'], ['violet', '438'], ['pink', '876']],
    twoPackets: [['sky', '57.6'], ['sky', '386'], ['violet', '2526'], ['violet', '2527'], ['violet', '2528'], ['violet', '2529'], ['violet', '2529'], ['pink', '5054']],
    oneRed: [['red', '2.43'], ['red', '1.07'], ['gold', '443'], ['gold', '443'], ['red', '1.08'], ['red', '1.08'], ['red', '1.08'], ['gold', '443'], ['gold', '443']],
    oneOrange: rep('orange', '2.19', 9),
    twoDetailBytes: [['sky', '887'], ['sky', '189'], ['violet', '447'], ['violet', '447'], ['violet', '447'], ['violet', '447'], ['violet', '447'], ['pink', '894']],
    twoDetailPackets: [['sky', '298'], ['sky', '818'], ['violet', '2578'], ['violet', '2580'], ['violet', '2580'], ['violet', '2583'], ['violet', '2583'], ['pink', '5165']]
};

const headCpcOld = ['Adapter ▽', '当前用量 ≡ ▽', '平均用量 ▽', '最大用量 ▽', '接收 packets ▽', '发送 packets ▽', '接收 bytes ▽', '发送 bytes ▽'];
const headCpcNew = ['Adapter ▽', 'Current Usage ratio ▽', 'Average Usage ratio ▽', 'Max Usage ratio ▽', 'Received Packets ▽', 'Sent Packets ▽', 'Received Bytes ▽', 'Sent Bytes ▽'];
const headPartOld = ['Adapter ▽', '发送速率 ▽', '接收速率 ▽', '发送 packets ▽', '接收 packets ▽', '发送 bytes ▽', '接收 bytes ▽'];
const headPartNew = ['Adapter ▽', 'Sent Rate ▽', 'Received Rate ▽', 'Sent Packets ▽', 'Received Packets ▽', 'Sent Bytes ▽', 'Received Bytes ▽'];

const tables = {
    cpcOld: {
        head: headCpcOld,
        rows: [
            ['OSD 0104 Z228-03', '12%', '12%', '12%', '23.8 K', '6.733', '5.85 kB', '9.88 mB'],
            ['OSD 010C Z228-18', '8%', '8%', '8%', '379 K', '14.4 K', '8.63 kB', '3.77 kB'],
            ['OSD 0174 Z228-36', '7.00%', '7.00%', '7.00%', '18.0 K', '5.85 K', '5.80 kB', '2.97 kB'],
            ['OSD 0140 Z228-20', '6%', '6%', '6%', '88.2', '0', '19.9 B', '0 B'],
            ['FCP 0140 Z228-31', '1%', '1%', '1%', '-', '-', '-', '-'],
            ['FCP 0144 Z228-31', '1%', '1%', '1%', '-', '-', '-', '-'],
            ['FCP 0141 Z228-30', '1%', '1%', '1%', '-', '-', '-', '-'],
            ['FCP 0148 Z228-30', '1%', '1%', '1%', '-', '-', '-', '-'],
            ['FCP 0150 Z228-30', '1%', '1%', '1%', '-', '-', '-', '-']
        ]
    },
    partitionOld: {
        head: headPartOld,
        rows: [
            ['LPAR032', '0 B/s', '465 B/s', '0.000278', '2.52 K', '0 B', '438 B'],
            ['LPAR071', '0 B/s', '936 B/s', '0.000278', '5.04 K', '0 B', '877 B'],
            ['LPAR018', '0 B/s', '465 B/s', '0.000278', '2.52 K', '0 B', '438 B'],
            ['LPAR078', '0 B/s', '465 B/s', '0.121', '2.52 K', '0 B', '438 B'],
            ['LPAR033', '0 B/s', '465 B/s', '0.488', '2.52 K', '5.88 mB', '438 B'],
            ['LPAR040', '0 B/s', '465 B/s', '0', '2.52 K', '0 B', '438 B'],
            ['LPAR053', '0 B/s', '465 B/s', '0.000556', '2.52 K', '0 B', '438 B'],
            ['LPAR058', '0 B/s', '465 B/s', '0.116', '2.58 K', '0 B', '447 B']
        ],
        total: ['Total', '0 B/s', '4.16 kB/s', '0.729', '22.6 K', '5.88 mB', '3.93 kB']
    },
    cpcNew: {
        head: headCpcNew,
        rows: [
            ['OSD 0104 Z228-03', '12%', '12%', '12%', '23.9 K', '6.733', '5.77 kB', '9.84 mB'],
            ['OSD 010C Z228-18', '7.00%', '7.00%', '7.00%', '38.2 K', '14.2 K', '8.69 kB', '3.78 kB'],
            ['OSD 0140 Z228-20', '6%', '6%', '6%', '83.6', '0', '19.8 B', '0 B'],
            ['OSD 0144 Z228-21', '1%', '1%', '1%', '3.86 K', '0.113', '663 B', '0 B'],
            ['OSD 0174 Z228-36', '7.00%', '7.00%', '7.00%', '17.7 K', '5.84 K', '5.73 kB', '2.93 kB'],
            ['OSD 0176 Z228-37', '6%', '6%', '6%', '5.25 K', '0.121', '911 B', '0 B'],
            ['Null1', '-', '-', '-', '0', '0', '0 B', '0 B'],
            ['CC4 0104 Z228-01', '0%', '0%', '0%', '-', '-', '-', '-'],
            ['CC4 0148 Z228-02', '0%', '0%', '0%', '-', '-', '-', '-']
        ]
    },
    partitionNew: {
        head: headPartNew,
        rows: [
            ['LPAR032', '0 B/s', '571 B/s', '0.000278', '2.60 K', '0 B', '451 B'],
            ['LPAR071', '0 B/s', '1.14 kB/s', '0.000527', '5.18 K', '0 B', '900 B'],
            ['LPAR018', '0 B/s', '571 B/s', '0.000527', '2.60 K', '0 B', '451 B'],
            ['LPAR078', '0 B/s', '571 B/s', '0.117', '2.60 K', '0 B', '451 B'],
            ['LPAR033', '0 B/s', '571 B/s', '0.497', '2.60 K', '5.58 mB', '451 B'],
            ['LPAR040', '0 B/s', '571 B/s', '0', '2.60 K', '0 B', '451 B'],
            ['LPAR053', '0 B/s', '571 B/s', '0', '2.60 K', '0 B', '450 B'],
            ['LPAR058', '0 B/s', '571 B/s', '0.107', '2.64 K', '0 B', '456 B']
        ],
        total: ['Total', '0 B/s', '5.14 kB/s', '0.723', '23.4 K', '5.58 mB', '4.06 kB']
    }
};

document.querySelectorAll('[data-chart]').forEach(function (el) {
    const w = el.clientWidth;
    const h = el.clientHeight;
    const body = charts[el.dataset.chart](w, h);
    el.innerHTML = `<svg width="${w}" height="${h}" viewBox="0 0 ${w} ${h}" font-family="Liberation Sans, sans-serif">${body}</svg>`;
});

document.querySelectorAll('[data-bars]').forEach(function (el) {
    el.innerHTML = barSets[el.dataset.bars].map((row, i) => {
        const name = el.dataset.bars.startsWith('one') && el.closest('.lower') ? 'OSD 0104 Z228-' + (10 + i) : 'LPAR0' + (32 + i);
        return `<div class="bar bar-${row[0]}"><span>${name}</span><span>${row[1]}</span></div>`;
    }).join('');
});

document.querySelectorAll('[data-stats]').forEach(function (el) {
    const values = ['12', '9', '7.00', '1', '1', '1', '1', '1', '1', '1', '1', '1', '1', '1', '1', '1', '1', '1', '1', '1', '1', '0', '0', '0', '0'];
    const heat = ['stat-hot', 'stat-warm', 'stat-mild'];
    el.innerHTML = values.map((value, i) => `<div class="stat ${heat[i] || ''}"><i>OSD 0104 Z228-${i + 10}</i><span>${value}<small>%</small></span></div>`).join('');
});

document.querySelectorAll('[data-table]').forEach(function (el) {
    const table = tables[el.dataset.table];
    const cells = (row, tag) => row.map(text => `<${tag}>${text}</${tag}>`).join('');
    let html = `<table class="mini-table"><thead><tr>${cells(table.head, 'th')}</tr></thead><tbody>`;
    table.rows.forEach(row => {
        html += `<tr>${cells(row, 'td')}</tr>`;
    });
    if (table.total) {
        html += `<tr class="total">${cells(table.total, 'td')}</tr>`;
    }
    el.innerHTML = html + '</tbody></table>';
});
```
